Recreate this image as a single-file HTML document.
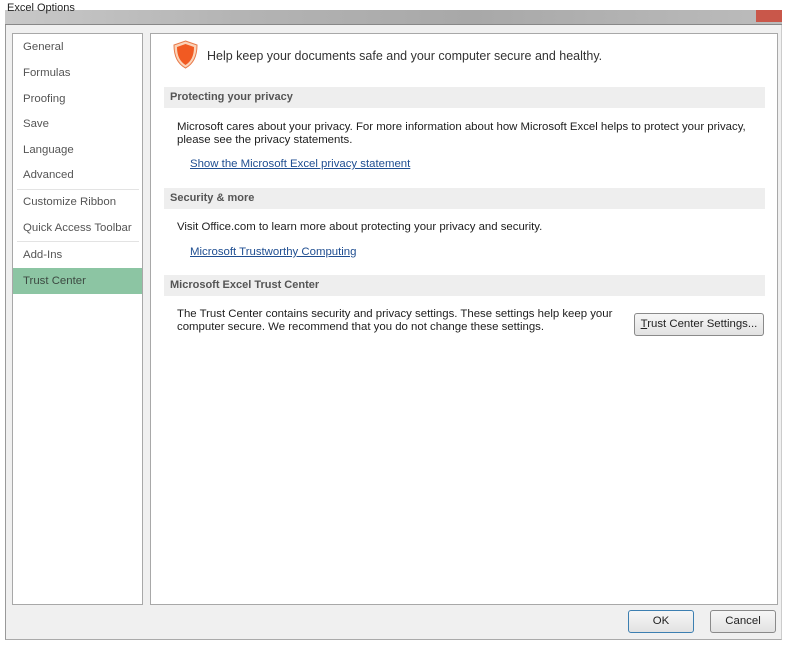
<!DOCTYPE html>
<html><head><meta charset="utf-8"><style>
*{margin:0;padding:0;box-sizing:border-box}
body{width:798px;height:653px;background:#fff;position:relative;overflow:hidden;font-family:"Liberation Sans",sans-serif;font-size:11.4px;color:#1e1e1e}
.a{position:absolute;white-space:nowrap}
#title{left:5px;top:10px;width:777px;height:15px;background:linear-gradient(90deg,#c8c8c8,#b4b4b4 30%,#a8a8a8 60%,#bcbcbc);border-bottom:1px solid #888}
#dlg{left:5px;top:25px;width:777px;height:615px;background:#f0f0f0;border-left:1px solid #999;border-right:1px solid #ccc;border-bottom:1px solid #aaa}
#left{left:12px;top:33px;width:131px;height:572px;background:#fff;border:1px solid #a8a8a8}
#right{left:150px;top:33px;width:628px;height:572px;background:#fff;border:1px solid #a8a8a8}
.nav{left:23px;color:#555}
.sep{left:17px;width:122px;height:1px;background:#e3e3e3}
.hd{left:164px;width:601px;height:21px;background:#eeeeee;font-weight:bold;color:#555;padding:4px 0 0 6px;font-size:11px}
.t{left:177px}
.lk{color:#1f4e91;text-decoration:underline;left:190px}
.btn{border:1px solid #8a8a8a;border-radius:3px;background:linear-gradient(#f6f6f6,#e2e2e2);text-align:center;color:#222}
</style></head><body>
<div class="a" id="title"><span style="position:absolute;left:2px;top:-8px;font-size:11px;color:#222">Excel Options</span></div>
<div class="a" style="left:756px;top:10px;width:26px;height:12px;background:#c9574a"></div>
<div class="a" id="dlg"></div>
<div class="a" id="left"></div>
<div class="a" id="right"></div>
<div class="a nav" style="top:41px">General</div>
<div class="a nav" style="top:67px">Formulas</div>
<div class="a nav" style="top:93px">Proofing</div>
<div class="a nav" style="top:118px">Save</div>
<div class="a nav" style="top:144px">Language</div>
<div class="a nav" style="top:169px">Advanced</div>
<div class="a sep" style="top:189px"></div>
<div class="a nav" style="top:196px">Customize Ribbon</div>
<div class="a nav" style="top:222px">Quick Access Toolbar</div>
<div class="a sep" style="top:241px"></div>
<div class="a nav" style="top:249px">Add-Ins</div>
<div class="a" style="left:13px;top:268px;width:129px;height:26px;background:#8cc5a3"></div>
<div class="a nav" style="top:275px;color:#3d4a42">Trust Center</div>
<svg class="a" style="left:172px;top:40px" width="27" height="29" viewBox="0 0 27 29"><path d="M13.5 1 L25 5 C25 17 21 24 13.5 28 C6 24 2 17 2 5 Z" fill="#fbd3b8" stroke="#e87a4a" stroke-width="1"/><path d="M13.5 4 L22 7 C22 16 19 21.5 13.5 25 C8 21.5 5 16 5 7 Z" fill="#f15a22"/></svg>
<div class="a" style="left:207px;top:49px;font-size:12.5px;color:#333">Help keep your documents safe and your computer secure and healthy.</div>
<div class="a hd" style="top:87px">Protecting your privacy</div>
<div class="a t" style="top:121px">Microsoft cares about your privacy. For more information about how Microsoft Excel helps to protect your privacy,</div>
<div class="a t" style="top:134px">please see the privacy statements.</div>
<div class="a lk" style="top:158px">Show the Microsoft Excel privacy statement</div>
<div class="a hd" style="top:188px">Security &amp; more</div>
<div class="a t" style="top:221px">Visit Office.com to learn more about protecting your privacy and security.</div>
<div class="a lk" style="top:246px">Microsoft Trustworthy Computing</div>
<div class="a hd" style="top:275px">Microsoft Excel Trust Center</div>
<div class="a t" style="top:308px">The Trust Center contains security and privacy settings. These settings help keep your</div>
<div class="a t" style="top:321px">computer secure. We recommend that you do not change these settings.</div>
<div class="a btn" style="left:634px;top:313px;width:130px;height:23px;padding-top:4px"><u>T</u>rust Center Settings...</div>
<div class="a btn" style="left:628px;top:610px;width:66px;height:23px;padding-top:4px;border-color:#3c7fb1">OK</div>
<div class="a btn" style="left:710px;top:610px;width:66px;height:23px;padding-top:4px">Cancel</div>
</body></html>
